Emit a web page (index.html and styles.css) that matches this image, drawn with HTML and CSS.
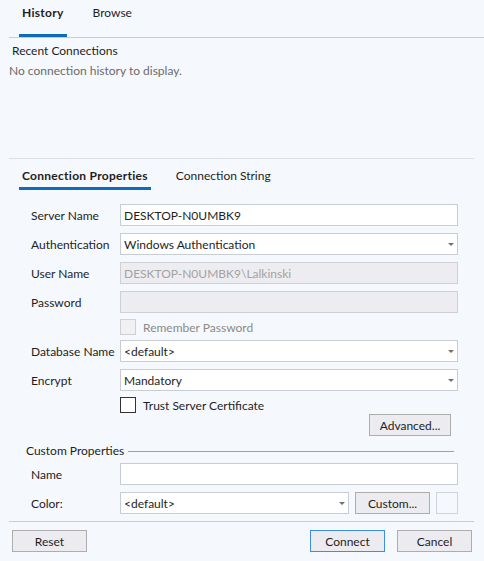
FILE: index.html
```html
<!DOCTYPE html>
<html lang="en">
<head>
    <meta charset="UTF-8">
    <title>Connect to Server</title>
    <link rel="stylesheet" href="styles.css">
</head>
<body>
    <div class="top-tabs">
        <span class="tab active">History</span>
        <span class="tab">Browse</span>
    </div>
    <div class="recent">
        <div class="recent-title">Recent Connections</div>
        <div class="recent-empty">No connection history to display.</div>
    </div>
    <div class="divider"></div>
    <div class="prop-tabs">
        <span class="tab active">Connection Properties</span>
        <span class="tab">Connection String</span>
    </div>
    <div class="form">
        <div class="row"><label>Server Name</label><div class="field">DESKTOP-N0UMBK9</div></div>
        <div class="row"><label>Authentication</label><div class="field select"><span>Windows Authentication</span><i class="arrow"></i></div></div>
        <div class="row"><label>User Name</label><div class="field disabled">DESKTOP-N0UMBK9\Lalkinski</div></div>
        <div class="row"><label>Password</label><div class="field disabled"></div></div>
        <div class="row check-row first"><span class="check disabled"></span><span class="check-label muted">Remember Password</span></div>
        <div class="row"><label>Database Name</label><div class="field select"><span>&lt;default&gt;</span><i class="arrow"></i></div></div>
        <div class="row"><label>Encrypt</label><div class="field select"><span>Mandatory</span><i class="arrow"></i></div></div>
        <div class="row check-row second"><span class="check"></span><span class="check-label">Trust Server Certificate</span></div>
        <div class="row actions"><button class="btn">Advanced...</button></div>
        <div class="group-title"><span>Custom Properties</span><span class="group-line"></span></div>
        <div class="row"><label>Name</label><div class="field"></div></div>
        <div class="row"><label>Color:</label>
            <div class="field select short"><span>&lt;default&gt;</span><i class="arrow"></i></div>
            <button class="btn custom">Custom...</button>
            <span class="swatch"></span>
        </div>
    </div>
    <div class="divider bottom"></div>
    <div class="footer">
        <button class="btn">Reset</button>
        <button class="btn primary">Connect</button>
        <button class="btn">Cancel</button>
    </div>
</body>
</html>
```

FILE: styles.css
```css
body { margin: 0; background: #f5f8fc; font-family: Lato, "Noto Sans", sans-serif; font-size: 12px; color: #1e1e1e; }
.top-tabs { display: flex; gap: 23px; height: 37px; margin-left: 9px; padding-left: 10px; border-bottom: 1px solid #c9cdd4; }
.tab { margin-top: 4px; padding: 0 3px 2px; line-height: 17px; border-bottom: 3px solid transparent; }
.tab.active { font-weight: bold; letter-spacing: 0.28px; border-bottom-color: #0f6cbd; }
.recent { height: 120px; padding-top: 3px; box-sizing: border-box; }
.recent-title { padding-left: 12px; line-height: 20px; }
.recent-empty { padding-left: 9px; line-height: 20px; color: #6b6b6b; }
.divider { height: 1px; background: #dcdfe4; margin: 0 10px 0 9px; }
.prop-tabs { display: flex; gap: 22px; padding-left: 19px; }
.prop-tabs .tab { margin-top: 8px; padding-bottom: 3px; }
.form { padding-top: 14px; }
.row { display: flex; align-items: center; height: 22px; margin-bottom: 7px; padding-left: 31px; }
.row label { width: 89px; flex: none; }
.field { width: 338px; height: 22px; box-sizing: border-box; border: 1px solid #c8ccd3; background: #fff; padding: 0 3px; display: flex; align-items: center; }
.field span { flex: 1; }
.field.disabled { background: #edecf0; border-color: #cfd0d6; color: #a3a3a3; }
.arrow { width: 0; height: 0; border-left: 3px solid transparent; border-right: 3px solid transparent; border-top: 3px solid #707070; }
.check-row { padding-left: 120px; height: 16px; }
.check-row.first { margin-top: -1px; margin-bottom: 5px; }
.check-row.second { margin-top: -1px; margin-bottom: 1px; }
.check { width: 16px; height: 16px; box-sizing: border-box; border: 1px solid #333; background: #fff; }
.check.disabled { border-color: #cfcfd5; background: #f1f1f4; }
.check-label { margin-left: 7px; }
.muted { color: #8a8a8a; }
.actions { justify-content: flex-end; width: 420px; margin-bottom: 0; }
.btn { height: 22px; width: 75px; box-sizing: border-box; border: 1px solid #adadad; background: #ecebf0; font: inherit; color: #1e1e1e; padding: 0; }
.actions .btn { width: 82px; }
.group-title { display: flex; align-items: center; line-height: 16px; margin: 7px 30px 4px 26px; }
.group-line { flex: 1; height: 1px; background: #a0a0a0; margin-left: 4px; }
.field.short { width: 229px; }
.custom { margin-left: 6px; }
.swatch { width: 22px; height: 22px; box-sizing: border-box; border: 1px solid #cfd2d8; margin-left: 6px; }
.divider.bottom { margin: 1px 10px 0 9px; background: #c8ccd3; }
.footer { display: flex; gap: 12px; padding: 8px 12px 0; }
.footer .primary { margin-left: auto; border-color: #3d8ee8; }
```
